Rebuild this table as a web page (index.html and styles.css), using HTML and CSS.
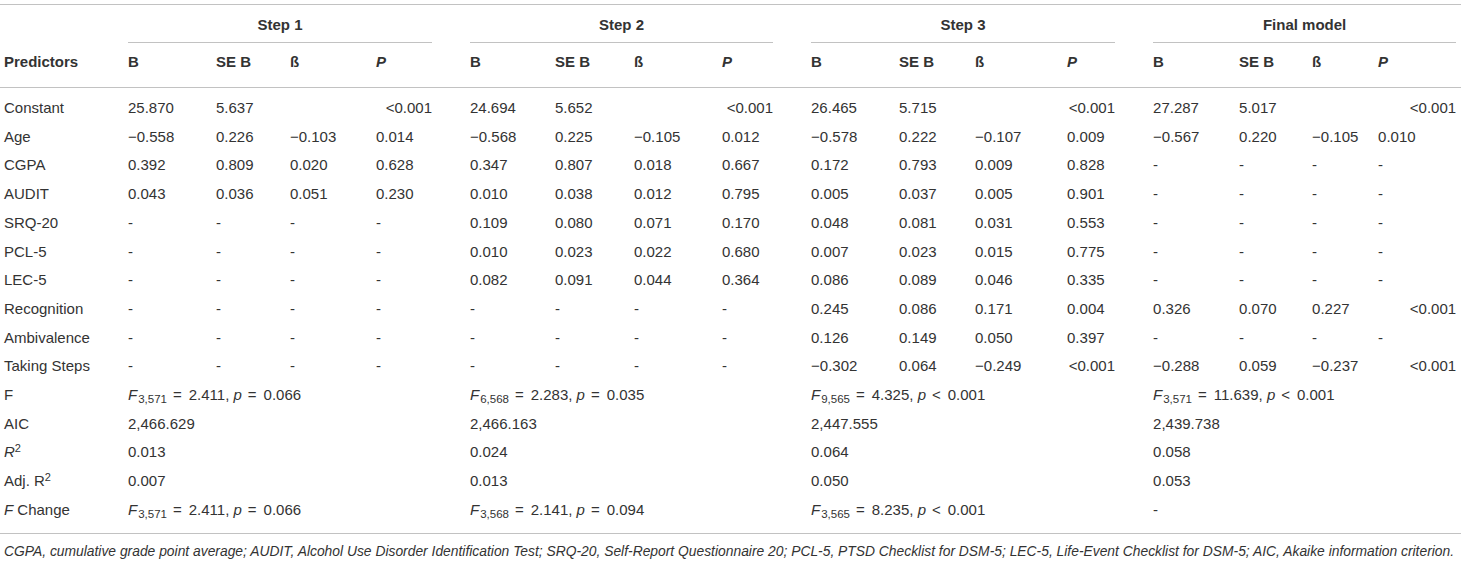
FILE: index.html
```html
<!DOCTYPE html>
<html lang="en">
<head>
<meta charset="utf-8">
<title>Hierarchical regression</title>
<link rel="stylesheet" href="styles.css">
</head>
<body>
<div class="wrap">
<table class="reg">
<colgroup>
<col class="c-pred"><col class="c1"><col class="c2"><col class="c3"><col class="c4"><col class="c5"><col class="c6"><col class="c7"><col class="c8"><col class="c9"><col class="c10"><col class="c11"><col class="c12"><col class="c13"><col class="c14"><col class="c15"><col class="c16">
</colgroup>
<thead>
<tr class="steps">
<th class="first"></th>
<th colspan="4"><div class="step">Step 1</div></th>
<th colspan="4"><div class="step">Step 2</div></th>
<th colspan="4"><div class="step">Step 3</div></th>
<th colspan="4" class="last"><div class="step">Final model</div></th>
</tr>
<tr class="cols">
<th class="first">Predictors</th>
<th>B</th><th>SE B</th><th>ß</th><th><i>P</i></th>
<th>B</th><th>SE B</th><th>ß</th><th><i>P</i></th>
<th>B</th><th>SE B</th><th>ß</th><th><i>P</i></th>
<th>B</th><th>SE B</th><th>ß</th><th class="last"><i>P</i></th>
</tr>
</thead>
<tbody>
<tr class="top">
<td class="first">Constant</td>
<td>25.870</td><td>5.637</td><td></td><td class="r">&lt;0.001</td>
<td>24.694</td><td>5.652</td><td></td><td class="r">&lt;0.001</td>
<td>26.465</td><td>5.715</td><td></td><td class="r">&lt;0.001</td>
<td>27.287</td><td>5.017</td><td></td><td class="r last">&lt;0.001</td>
</tr>
<tr>
<td class="first">Age</td>
<td>−0.558</td><td>0.226</td><td>−0.103</td><td>0.014</td>
<td>−0.568</td><td>0.225</td><td>−0.105</td><td>0.012</td>
<td>−0.578</td><td>0.222</td><td>−0.107</td><td>0.009</td>
<td>−0.567</td><td>0.220</td><td>−0.105</td><td class="last">0.010</td>
</tr>
<tr>
<td class="first">CGPA</td>
<td>0.392</td><td>0.809</td><td>0.020</td><td>0.628</td>
<td>0.347</td><td>0.807</td><td>0.018</td><td>0.667</td>
<td>0.172</td><td>0.793</td><td>0.009</td><td>0.828</td>
<td>-</td><td>-</td><td>-</td><td class="last">-</td>
</tr>
<tr>
<td class="first">AUDIT</td>
<td>0.043</td><td>0.036</td><td>0.051</td><td>0.230</td>
<td>0.010</td><td>0.038</td><td>0.012</td><td>0.795</td>
<td>0.005</td><td>0.037</td><td>0.005</td><td>0.901</td>
<td>-</td><td>-</td><td>-</td><td class="last">-</td>
</tr>
<tr>
<td class="first">SRQ-20</td>
<td>-</td><td>-</td><td>-</td><td>-</td>
<td>0.109</td><td>0.080</td><td>0.071</td><td>0.170</td>
<td>0.048</td><td>0.081</td><td>0.031</td><td>0.553</td>
<td>-</td><td>-</td><td>-</td><td class="last">-</td>
</tr>
<tr>
<td class="first">PCL-5</td>
<td>-</td><td>-</td><td>-</td><td>-</td>
<td>0.010</td><td>0.023</td><td>0.022</td><td>0.680</td>
<td>0.007</td><td>0.023</td><td>0.015</td><td>0.775</td>
<td>-</td><td>-</td><td>-</td><td class="last">-</td>
</tr>
<tr>
<td class="first">LEC-5</td>
<td>-</td><td>-</td><td>-</td><td>-</td>
<td>0.082</td><td>0.091</td><td>0.044</td><td>0.364</td>
<td>0.086</td><td>0.089</td><td>0.046</td><td>0.335</td>
<td>-</td><td>-</td><td>-</td><td class="last">-</td>
</tr>
<tr>
<td class="first">Recognition</td>
<td>-</td><td>-</td><td>-</td><td>-</td>
<td>-</td><td>-</td><td>-</td><td>-</td>
<td>0.245</td><td>0.086</td><td>0.171</td><td>0.004</td>
<td>0.326</td><td>0.070</td><td>0.227</td><td class="r last">&lt;0.001</td>
</tr>
<tr>
<td class="first">Ambivalence</td>
<td>-</td><td>-</td><td>-</td><td>-</td>
<td>-</td><td>-</td><td>-</td><td>-</td>
<td>0.126</td><td>0.149</td><td>0.050</td><td>0.397</td>
<td>-</td><td>-</td><td>-</td><td class="last">-</td>
</tr>
<tr>
<td class="first">Taking Steps</td>
<td>-</td><td>-</td><td>-</td><td>-</td>
<td>-</td><td>-</td><td>-</td><td>-</td>
<td>−0.302</td><td>0.064</td><td>−0.249</td><td class="r">&lt;0.001</td>
<td>−0.288</td><td>0.059</td><td>−0.237</td><td class="r last">&lt;0.001</td>
</tr>
<tr>
<td class="first">F</td>
<td colspan="4"><i>F</i><sub>3,571</sub><span class="op">=</span>2.411, <i>p</i><span class="op">=</span>0.066</td>
<td colspan="4"><i>F</i><sub>6,568</sub><span class="op">=</span>2.283, <i>p</i><span class="op">=</span>0.035</td>
<td colspan="4"><i>F</i><sub>9,565</sub><span class="op">=</span>4.325, <i>p</i><span class="op">&lt;</span>0.001</td>
<td colspan="4" class="last"><i>F</i><sub>3,571</sub><span class="op">=</span>11.639, <i>p</i><span class="op">&lt;</span>0.001</td>
</tr>
<tr>
<td class="first">AIC</td>
<td colspan="4">2,466.629</td>
<td colspan="4">2,466.163</td>
<td colspan="4">2,447.555</td>
<td colspan="4" class="last">2,439.738</td>
</tr>
<tr>
<td class="first"><i>R</i><sup>2</sup></td>
<td colspan="4">0.013</td>
<td colspan="4">0.024</td>
<td colspan="4">0.064</td>
<td colspan="4" class="last">0.058</td>
</tr>
<tr>
<td class="first">Adj. R<sup>2</sup></td>
<td colspan="4">0.007</td>
<td colspan="4">0.013</td>
<td colspan="4">0.050</td>
<td colspan="4" class="last">0.053</td>
</tr>
<tr class="bottom">
<td class="first"><i>F</i> Change</td>
<td colspan="4"><i>F</i><sub>3,571</sub><span class="op">=</span>2.411, <i>p</i><span class="op">=</span>0.066</td>
<td colspan="4"><i>F</i><sub>3,568</sub><span class="op">=</span>2.141, <i>p</i><span class="op">=</span>0.094</td>
<td colspan="4"><i>F</i><sub>3,565</sub><span class="op">=</span>8.235, <i>p</i><span class="op">&lt;</span>0.001</td>
<td colspan="4" class="last">-</td>
</tr>
</tbody>
</table>
<p class="note">CGPA, cumulative grade point average; AUDIT, Alcohol Use Disorder Identification Test; SRQ-20, Self-Report Questionnaire 20; PCL-5, PTSD Checklist for DSM-5; LEC-5, Life-Event Checklist for DSM-5; AIC, Akaike information criterion.</p>
</div>
</body>
</html>
```

FILE: styles.css
```css
html, body {
  margin: 0;
  padding: 0;
  background: #ffffff;
}

body {
  font-family: "Liberation Sans", Arial, sans-serif;
  color: #333333;
  font-size: 15px;
}

.wrap {
  padding-top: 4px;
  width: 1461px;
}

.reg {
  width: 1461px;
  table-layout: fixed;
  border-collapse: collapse;
  border-top: 1px solid #c2c2c2;
  border-bottom: 1px solid #c2c2c2;
}

.c-pred { width: 128px; }
.c1 { width: 88px; }
.c2 { width: 74px; }
.c3 { width: 86px; }
.c4 { width: 94px; }
.c5 { width: 85px; }
.c6 { width: 79px; }
.c7 { width: 88px; }
.c8 { width: 89px; }
.c9 { width: 88px; }
.c10 { width: 76px; }
.c11 { width: 92px; }
.c12 { width: 86px; }
.c13 { width: 86px; }
.c14 { width: 73px; }
.c15 { width: 66px; }
.c16 { width: 83px; }

.reg th,
.reg td {
  padding: 5px 0;
  text-align: left;
  vertical-align: top;
  white-space: nowrap;
  line-height: 18.7px;
  font-weight: normal;
}

.reg .first {
  padding-left: 4px;
}

.reg th.last,
.reg td.last {
  padding-right: 5px;
}

.reg td.r {
  text-align: right;
  padding-right: 38px;
}

.reg td.r.last {
  padding-right: 5px;
}

.steps th {
  padding: 0;
  font-weight: bold;
}

.step {
  text-align: center;
  padding: 11px 0 8px;
  line-height: 18px;
  margin-right: 38px;
  border-bottom: 1px solid #c2c2c2;
}

.steps th.last .step {
  margin-right: 0;
}

.cols th {
  font-weight: bold;
  padding-top: 10px;
  padding-bottom: 16px;
  line-height: 18px;
  border-bottom: 1px solid #c2c2c2;
}

.top td {
  padding-top: 11px;
}

.bottom td {
  padding-bottom: 13.5px;
}

.op {
  margin: 0 7px 0 6px;
}

sub {
  font-size: 11.5px;
  vertical-align: -3px;
  line-height: 0;
  margin-left: 1px;
}

sup {
  font-size: 11px;
  vertical-align: 5px;
  line-height: 0;
}

.note {
  margin: 0;
  padding: 9px 0 0 4px;
  font-size: 13.85px;
  line-height: 16px;
  font-style: italic;
  white-space: nowrap;
}
```
